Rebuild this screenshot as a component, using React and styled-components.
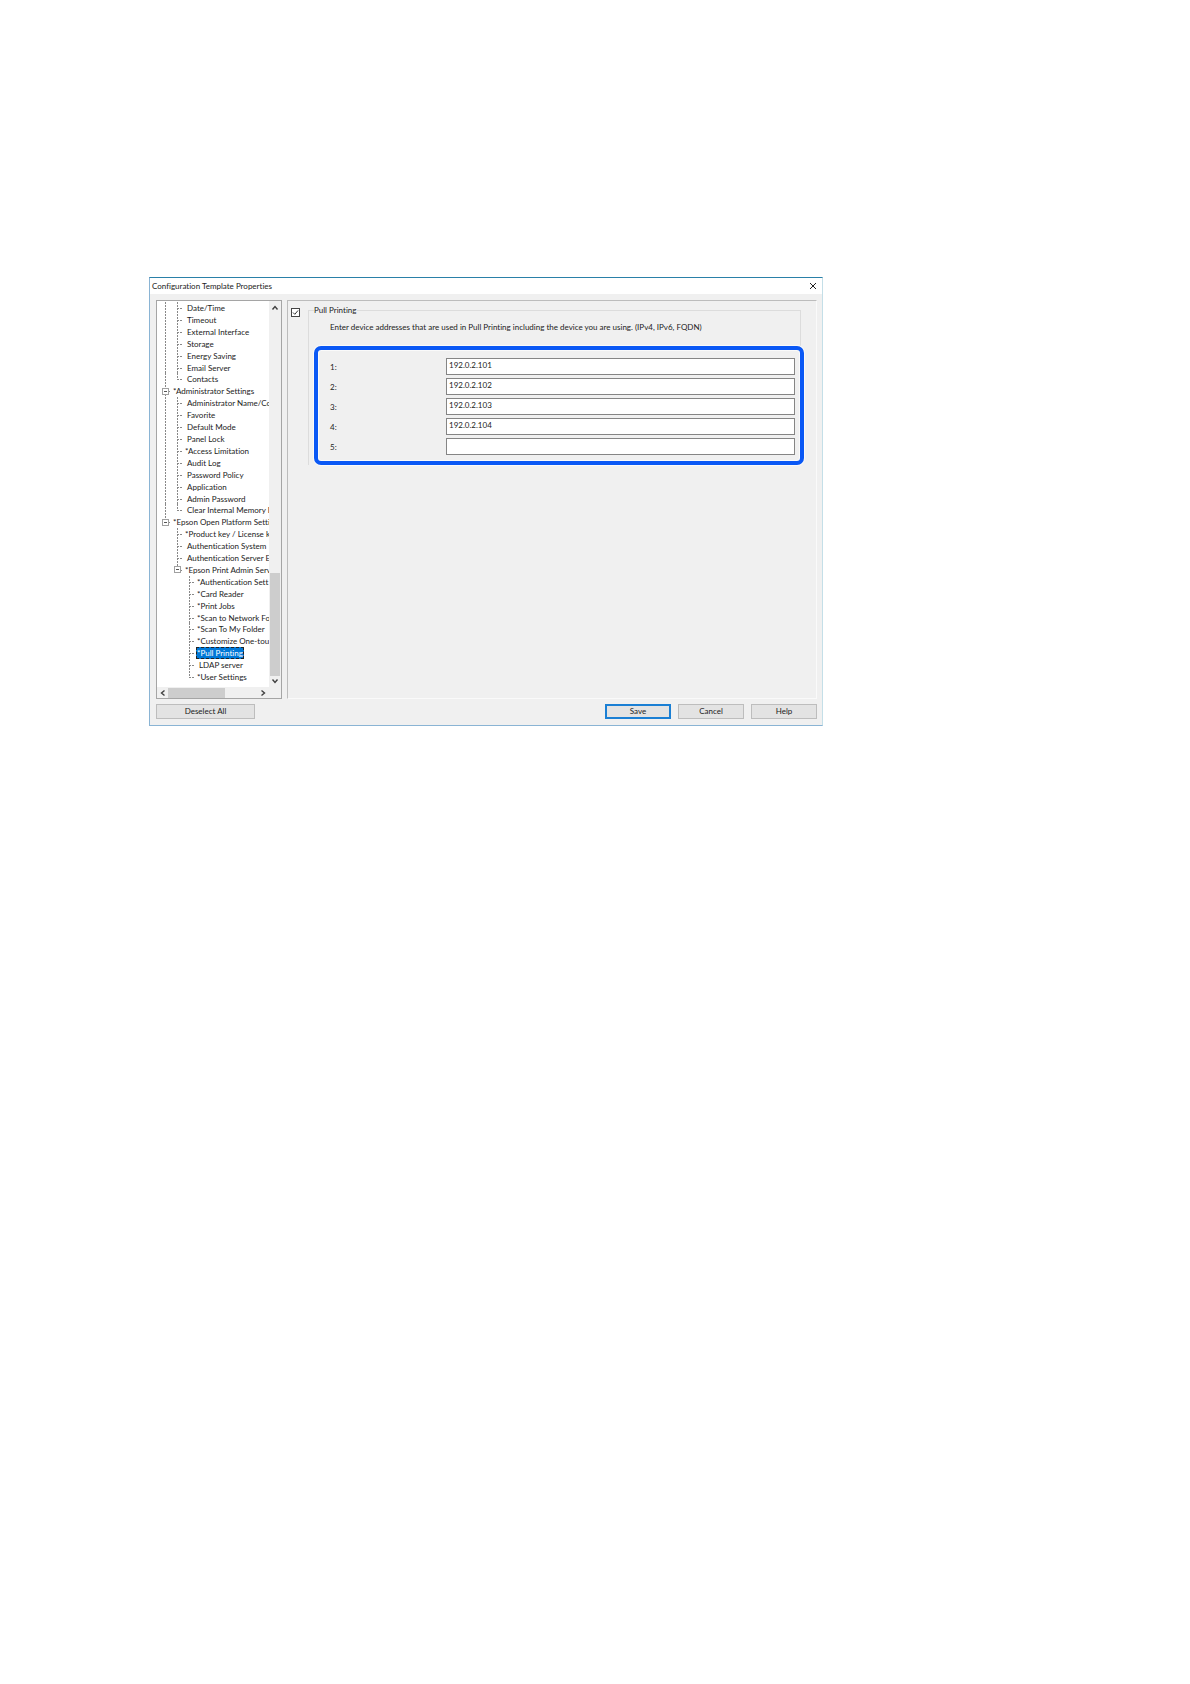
import { useState } from "react";
import styled, { createGlobalStyle } from "styled-components";

const TREE = [
  { label: "Date/Time", guides: ["line", "tee"] },
  { label: "Timeout", guides: ["line", "tee"] },
  { label: "External Interface", guides: ["line", "tee"] },
  { label: "Storage", guides: ["line", "tee"] },
  { label: "Energy Saving", guides: ["line", "tee"] },
  { label: "Email Server", guides: ["line", "tee"] },
  { label: "Contacts", guides: ["line", "end"] },
  { label: "*Administrator Settings", guides: ["tee"], open: true },
  { label: "Administrator Name/Co", guides: ["line", "tee"] },
  { label: "Favorite", guides: ["line", "tee"] },
  { label: "Default Mode", guides: ["line", "tee"] },
  { label: "Panel Lock", guides: ["line", "tee"] },
  { label: "*Access Limitation", guides: ["line", "tee"] },
  { label: "Audit Log", guides: ["line", "tee"] },
  { label: "Password Policy", guides: ["line", "tee"] },
  { label: "Application", guides: ["line", "tee"] },
  { label: "Admin Password", guides: ["line", "tee"] },
  { label: "Clear Internal Memory D", guides: ["line", "end"] },
  { label: "*Epson Open Platform Settin", guides: ["end"], open: true },
  { label: "*Product key / License k", guides: ["blank", "tee"] },
  { label: "Authentication System", guides: ["blank", "tee"] },
  { label: "Authentication Server E", guides: ["blank", "tee"] },
  { label: "*Epson Print Admin Serv", guides: ["blank", "end"], open: true },
  { label: "*Authentication Sett", guides: ["blank", "blank", "tee"] },
  { label: "*Card Reader", guides: ["blank", "blank", "tee"] },
  { label: "*Print Jobs", guides: ["blank", "blank", "tee"] },
  { label: "*Scan to Network Fo", guides: ["blank", "blank", "tee"] },
  { label: "*Scan To My Folder", guides: ["blank", "blank", "tee"] },
  { label: "*Customize One-tou", guides: ["blank", "blank", "tee"] },
  { label: "*Pull Printing", guides: ["blank", "blank", "tee"] },
  { label: "LDAP server", guides: ["blank", "blank", "tee"] },
  { label: "*User Settings", guides: ["blank", "blank", "end"] },
];

const ARROWS = {
  up: "M1.5 5.5 L4 2.5 L6.5 5.5",
  down: "M1.5 2.5 L4 5.5 L6.5 2.5",
  left: "M5.5 1.5 L2.5 4 L5.5 6.5",
  right: "M2.5 1.5 L5.5 4 L2.5 6.5",
};

const Arrow = ({ dir }) => (
  <svg width="8" height="8" viewBox="0 0 8 8" fill="none" stroke="#404040" strokeWidth="1.4">
    <path d={ARROWS[dir]} />
  </svg>
);

const TreeRow = ({ item, selected, onSelect }) => {
  const last = item.guides.length - 1;

  return (
    <Row>
      {item.guides.map((type, i) => (
        <Guide key={i} $type={type}>
          {item.open && i === last ? (
            <svg width="7" height="7" viewBox="0 0 7 7" shapeRendering="crispEdges">
              <rect x="0.5" y="0.5" width="6" height="6" fill="#fff" stroke="#a0a0a0" />
              <path d="M2 3.5 H5" stroke="#555" />
            </svg>
          ) : null}
        </Guide>
      ))}
      <Label
        type="button"
        $plain={!item.label.startsWith("*")}
        $selected={selected}
        onClick={onSelect}
      >
        {item.label}
      </Label>
    </Row>
  );
};

const App = () => {
  const [selected, setSelected] = useState("*Pull Printing");
  const [enabled, setEnabled] = useState(true);
  const [addresses, setAddresses] = useState([
    "192.0.2.101",
    "192.0.2.102",
    "192.0.2.103",
    "192.0.2.104",
    "",
  ]);

  const changeAddress = (index, value) => {
    setAddresses((current) => current.map((a, i) => (i === index ? value : a)));
  };

  return (
    <Page>
      <GlobalStyle />
      <Dialog>
        <TitleBar>
          <Title>Configuration Template Properties</Title>
          <CloseBtn type="button" aria-label="Close">
            <svg width="8" height="8" viewBox="0 0 8 8" stroke="#222" strokeWidth="1">
              <path d="M1 1 L7 7 M7 1 L1 7" />
            </svg>
          </CloseBtn>
        </TitleBar>
        <Body>
          <Panes>
            <TreePane>
              <TreeList>
                {TREE.map((item) => (
                  <TreeRow
                    key={item.label}
                    item={item}
                    selected={item.label === selected}
                    onSelect={() => setSelected(item.label)}
                  />
                ))}
              </TreeList>
              <VScroll>
                <Arrow dir="up" />
                <VThumb />
                <Arrow dir="down" />
              </VScroll>
              <HScroll>
                <Arrow dir="left" />
                <HThumb />
                <Arrow dir="right" />
              </HScroll>
            </TreePane>
            <SettingPane>
              <Check
                type="checkbox"
                aria-label="Pull Printing"
                checked={enabled}
                onChange={(e) => setEnabled(e.target.checked)}
              />
              <Group>
                <Legend>Pull Printing</Legend>
                <Description>
                  Enter device addresses that are used in Pull Printing including the device you
                  are using. (IPv4, IPv6, FQDN)
                </Description>
                <AddressList>
                  {addresses.map((address, i) => (
                    <AddressRow key={i}>
                      <label htmlFor={`address${i}`}>{i + 1}:</label>
                      <AddressInput
                        id={`address${i}`}
                        type="text"
                        value={address}
                        onChange={(e) => changeAddress(i, e.target.value)}
                      />
                    </AddressRow>
                  ))}
                </AddressList>
              </Group>
            </SettingPane>
          </Panes>
          <Footer>
            <Btn type="button" $wide>
              Deselect All
            </Btn>
            <BtnCtn>
              <Btn type="button" $primary>
                Save
              </Btn>
              <Btn type="button">Cancel</Btn>
              <Btn type="button">Help</Btn>
            </BtnCtn>
          </Footer>
        </Body>
      </Dialog>
    </Page>
  );
};

const GlobalStyle = createGlobalStyle`
  * {
    box-sizing: border-box;
  }

  body {
    margin: 0;
    background-color: #fff;
  }

  body, button, input {
    font-family: Lato, "Open Sans", sans-serif;
    font-size: 8px;
    font-variant-ligatures: none;
    line-height: 12px;
    color: #222;
  }
`;

const Page = styled.main`
  padding: 277px 149px 0;
`;

const Dialog = styled.section`
  max-width: 674px;
  border: 1px solid #8ab4d4;
  border-top-color: #2a80a8;
  border-right-color: #c4dfe8;
`;

const TitleBar = styled.header`
  display: flex;
  justify-content: space-between;
  align-items: center;
  height: 16px;
  padding: 0 4px 0 2px;
  background-color: #fff;
`;

const Title = styled.h1`
  margin: 0;
  font-size: 8px;
  font-weight: 400;
`;

const CloseBtn = styled.button`
  display: flex;
  padding: 0 1px;
  background: none;
  border: none;
`;

const Body = styled.div`
  display: flex;
  flex-direction: column;
  gap: 5px;
  padding: 6px 5px 6px 6px;
  background-color: #f0f0f0;
`;

const Panes = styled.div`
  display: flex;
  gap: 5px;
`;

const TreePane = styled.div`
  flex: none;
  display: grid;
  grid-template-columns: 1fr 12px;
  grid-template-rows: 1fr 11px;
  width: 126px;
  height: 399px;
  border: 1px solid #a5a5a5;
  background-color: #fff;
`;

const TreeList = styled.ul`
  display: grid;
  grid-auto-rows: 1fr;
  margin: 0;
  padding: 1px 0 4px 2px;
  list-style: none;
  overflow: hidden;
`;

const Row = styled.li`
  display: flex;
  min-height: 0;
  min-width: 0;
`;

const dots = (dir) => `repeating-linear-gradient(${dir}, #888 0 2px, transparent 2px 3px)`;

const Guide = styled.span`
  flex: none;
  display: flex;
  justify-content: center;
  align-items: center;
  width: 12px;
  background-image: ${dots("to bottom")}, ${dots("to right")};
  background-repeat: no-repeat;
  background-position: 6px 0, 6px 6px;
  background-size: ${(props) => {
    if (props.$type === "line") {
      return "1px 100%, 0 0";
    } else if (props.$type === "tee") {
      return "1px 100%, 6px 1px";
    } else if (props.$type === "end") {
      return "1px 6px, 6px 1px";
    } else {
      return "0 0, 0 0";
    }
  }};
`;

const Label = styled.button`
  height: 12px;
  margin-left: 1px;
  padding: 0 1px 0 ${(props) => (props.$plain ? "3px" : "1px")};
  border: none;
  white-space: nowrap;
  background-color: ${(props) => (props.$selected ? "#0078d7" : "transparent")};
  color: ${(props) => (props.$selected ? "#fff" : "#222")};
  outline: ${(props) => (props.$selected ? "1px dashed #222" : "none")};
  outline-offset: -1px;
`;

const VScroll = styled.div`
  display: flex;
  flex-direction: column;
  align-items: center;
  padding: 3px 0 2px;
  background-color: #f0f0f0;
`;

const VThumb = styled.div`
  width: 10px;
  height: 103px;
  margin: auto 0 1px;
  background-color: #cdcdcd;
`;

const HScroll = styled.div`
  display: flex;
  align-items: center;
  grid-column: 1 / -1;
  padding: 0 14px 0 2px;
  background-color: #f0f0f0;
`;

const HThumb = styled.div`
  width: 57px;
  height: 10px;
  margin: 0 auto 0 1px;
  background-color: #cdcdcd;
`;

const SettingPane = styled.div`
  flex: 1;
  display: flex;
  align-items: flex-start;
  gap: 8px;
  min-width: 0;
  padding: 3px 15px 0 3px;
  border: 1px solid #fafafa;
  border-top-color: #bcbcbc;
  border-left-color: #bcbcbc;
`;

const Check = styled.input`
  appearance: none;
  flex: none;
  width: 9px;
  height: 9px;
  margin: 4px 0 0;
  border: 1px solid #444;
  background-color: #fff;

  &:checked {
    background-image: url("data:image/svg+xml,%3Csvg xmlns='http://www.w3.org/2000/svg' viewBox='0 0 7 7'%3E%3Cpath d='M1 3.5 L2.8 5.3 L6 1.5' fill='none' stroke='%23333'/%3E%3C/svg%3E");
  }
`;

const Group = styled.fieldset`
  flex: 1;
  min-width: 0;
  margin: 0;
  padding: 5px 0 0 5px;
  border: 1px solid #dcdcdc;
  border-bottom: none;
`;

const Legend = styled.legend`
  padding: 0 1px 0 0;
`;

const Description = styled.p`
  margin: 0 0 13px;
  padding-left: 16px;
`;

const AddressList = styled.div`
  display: grid;
  gap: 3px;
  margin-right: -4px;
  padding: 8px 5px 6px 12px;
  border: 4px solid #0a58f5;
  border-radius: 7px;
  box-shadow: 0 0 0 1px #fafafa, inset 0 0 0 1px #fafafa;
`;

const AddressRow = styled.div`
  display: grid;
  grid-template-columns: 116px 1fr;
  align-items: center;
`;

const AddressInput = styled.input`
  width: 100%;
  min-width: 0;
  height: 17px;
  padding: 0 2px 3px;
  border: 1px solid #858585;
  border-radius: 0;
  background-color: #fff;
`;

const Footer = styled.footer`
  display: flex;
  justify-content: space-between;
`;

const BtnCtn = styled.div`
  display: flex;
  gap: 7px;
`;

const Btn = styled.button`
  width: ${(props) => (props.$wide ? "99px" : "66px")};
  height: 15px;
  padding: 0;
  border: 1px solid #bdbdbd;
  background-color: #e3e3e3;
  line-height: 11px;
  ${(props) => props.$primary && "border: 2px solid #1a7fd4;"}
`;

export default App;
